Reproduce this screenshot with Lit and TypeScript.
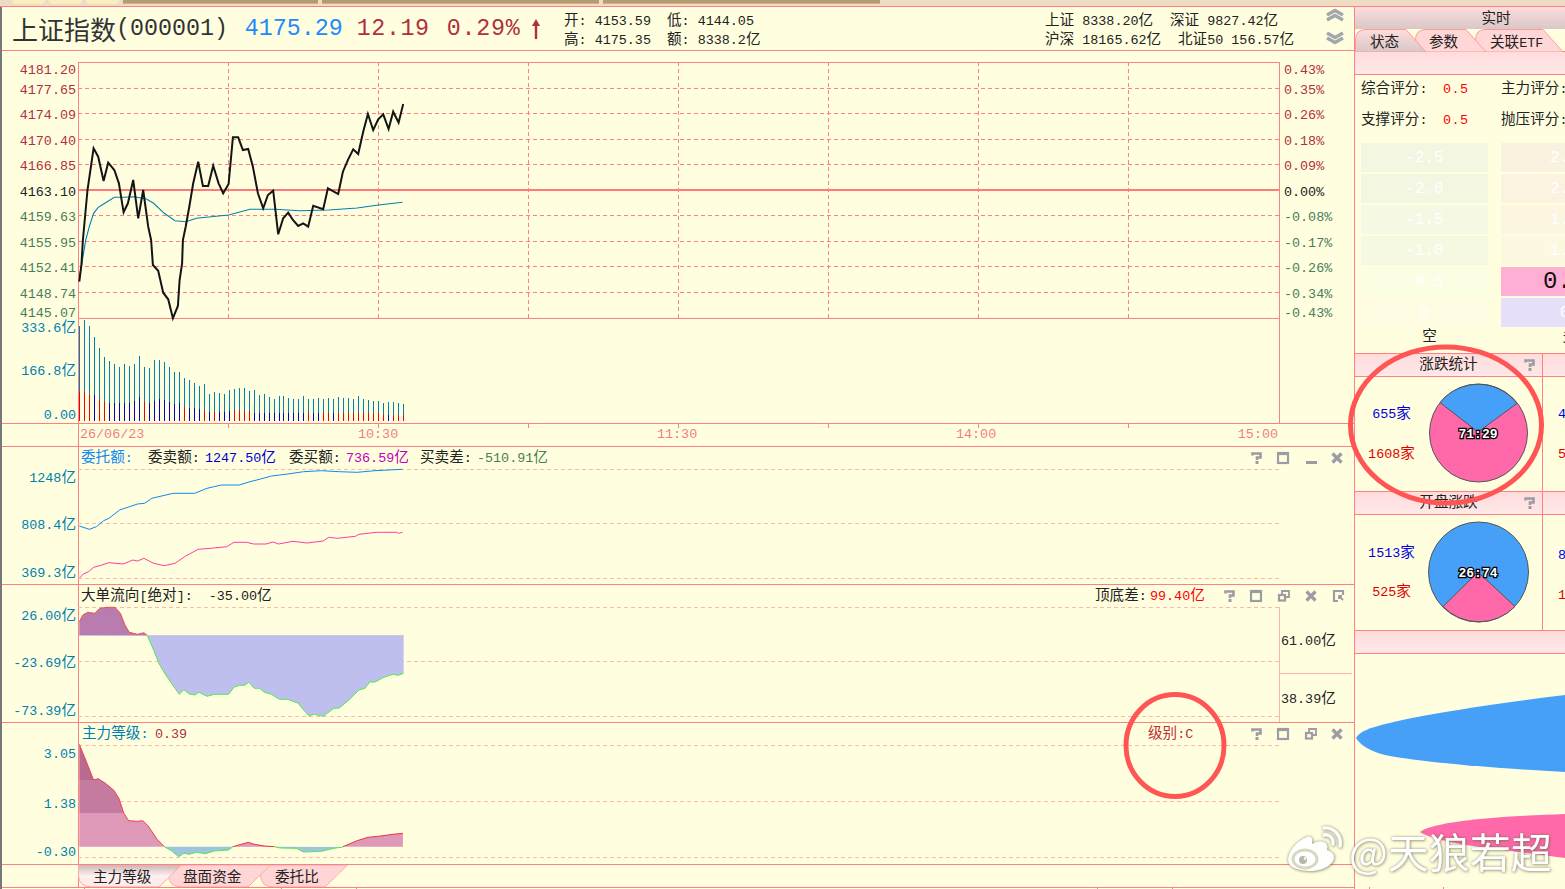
import { LitElement, html, css, svg } from "lit";
import { customElement } from "lit/decorators.js";

const MX = (v: number) => +(v / 2.8).toFixed(1);
// series were read from 2.8x / 3x crops: convert to page coordinates
const pts = (a: number[], yo: number) => {
  const o: string[] = [];
  for (let i = 0; i < a.length; i += 2) o.push(`${MX(a[i])},${+(yo + a[i + 1] / 3).toFixed(1)}`);
  return o.join(" ");
};

const PRICE = [222,845,228,795,232,720,245,570,262,445,275,470,290,543,303,488,320,510,333,550,346,637,358,610,373,540,387,655,401,570,415,680,423,720,428,795,443,812,457,878,471,898,484,955,498,918,503,840,510,790,512,720,520,680,530,620,541,550,555,485,568,558,583,558,597,497,612,550,625,580,640,552,652,412,667,412,680,450,695,447,708,500,722,580,737,625,750,585,765,572,779,703,793,655,807,638,820,660,835,678,849,670,863,680,877,617,905,628,918,565,947,582,960,515,975,478,989,448,1003,462,1017,395,1030,342,1045,390,1059,358,1073,343,1088,387,1101,335,1116,368,1129,312];
const AVG = [222,830,228,800,240,720,250,680,262,640,275,622,290,612,320,592,345,592,375,590,410,597,430,610,460,640,490,662,520,665,550,655,640,645,700,628,770,628,840,632,920,630,1000,624,1060,615,1127,607];
const VOL = [258,240,258,292,325,352,363,372,381,373,378,372,348,381,385,360,360,367,381,397,396,415,420,429,437,433,461,457,458,462,449,446,444,444,452,451,464,462,471,477,468,468,473,477,477,468,478,478,475,478,473,477,471,475,475,477,468,477,480,483,484,490,487,487,489,492];
const VOLB = [455,455,465,465,478,485,490,490,490,490,490,483,470,485,490,482,478,480,485,492,490,500,503,503,507,512,517,516,516,516,513,510,510,513,514,518,520,520,520,520,520,520,520,520,520,520,520,518,520,518,518,520,518,518,518,518,518,518,520,520,520,524,524,524,526,526];
const VOLC = "rrrbrrbbbbbbbrbbbbbbbrbbbrbrbbbrrrrbbbbbbbbbbbrbbrrbrrrrrrrrrrbr".padEnd(66, "r");
const BLUE = [222,138,250,148,270,140,290,122,305,115,335,90,385,72,405,70,425,55,485,40,545,40,580,25,620,15,670,15,700,5,730,-3,760,-12,800,-17,850,-25,900,-28,950,-25,1000,-23,1050,-28,1127,-32];
const PINK = [222,295,232,283,248,275,262,262,285,255,305,248,345,252,372,240,385,243,403,235,430,250,460,257,490,250,520,228,555,208,590,205,635,200,655,187,690,187,710,192,745,192,765,186,780,192,820,184,860,189,905,183,920,172,945,175,995,169,1005,163,1055,157,1110,157,1117,160,1127,157];
const FLOW_UP = [222,465,222,425,232,405,245,397,265,400,280,385,300,382,322,382,337,400,350,435,362,457,385,463,403,458,412,466];
const FLOW_DN = [412,466,430,510,445,550,460,578,480,610,502,643,515,629,530,642,545,645,557,637,580,649,600,643,640,643,655,622,670,616,685,616,697,607,712,625,727,625,740,637,760,643,782,658,805,658,835,670,850,690,865,707,880,703,905,709,935,685,950,684,975,662,1005,630,1022,625,1035,606,1050,606,1075,592,1100,583,1115,586,1130,580,1130,466];
const L_A = [222,440,222,133,240,180,262,240,275,236,295,250,318,270,333,295,347,340,360,362,385,364,400,362,415,378,440,418,460,440];
const L_B = [460,440,480,452,500,470,515,460,530,463,550,457,575,461,600,453,640,450,652,440];
const L_C = [652,440,695,427,712,433,740,438,768,440];
const L_D = [768,440,785,444,830,445,850,456,900,454,935,445,960,441];
const L_E = [960,440,1000,422,1030,412,1060,409,1100,403,1128,400,1128,440];

const CJK = /([\u3000-\u9fff\uff00-\uffef]+)/;
const mixS = (s: string) => s.split(CJK).map((p, i) => (i % 2 ? svg`<tspan class="c">${p}</tspan>` : p));
const mixH = (s: string) => s.split(CJK).map((p, i) => (i % 2 ? html`<span class="c">${p}</span>` : p));
const T = (x: number, y: number, s: string, cls = "", end = false) =>
  svg`<text x=${x} y=${y + 5} class="${cls} ${end ? "e" : ""}">${mixS(s)}</text>`;

const Hd = (y: number) => svg`<line class="dash" x1="78" x2="1279" y1=${y + 0.5} y2=${y + 0.5}></line>`;
const Qm = (x: number, y: number) => svg`<path class="ic3b" d="M${x - 4.5} ${y - 2.5}V${y - 4.5}H${x + 3.5}V${y - 0.5}H${x}V${y + 2}"></path><rect class="icf" x=${x - 1.5} y=${y + 3} width="3" height="3"></rect>`;
const Sq = (x: number, y: number) => svg`<rect class="ic" x=${x - 5} y=${y - 5} width="10" height="10"></rect><line class="ic" x1=${x - 5} x2=${x + 5} y1=${y - 4} y2=${y - 4}></line>`;
const Rs = (x: number, y: number) => svg`<path class="ic1" d="M${x - 2} ${y - 2}V${y - 5}H${x + 5}V${y + 1}H${x + 2}"></path><rect class="ic" x=${x - 5} y=${y - 1} width="6" height="5.500"></rect>`;
const Xx = (x: number, y: number) => svg`<path class="ic3" d="M${x - 4.5} ${y - 4.5}L${x + 4.5} ${y + 4.5}M${x + 4.5} ${y - 4.5}L${x - 4.5} ${y + 4.5}"></path>`;
const Mn = (x: number, y: number) => svg`<rect class="icf" x=${x - 5} y=${y + 3} width="11" height="3"></rect>`;
const Rb = (x: number, y: number) => svg`<path class="ic" d="M${x + 4} ${y - 1}V${y - 5}H${x - 5}V${y + 5}H${x - 1}"></path><path class="ic1" d="M${x} ${y}L${x + 4} ${y + 4}M${x} ${y + 3}V${y}H${x + 3}"></path>`;

const TICKS = [228, 378, 528, 678, 828, 978, 1128];
const LY = [69, 89, 114, 140, 165, 191, 216, 242, 267, 293, 312];
const LV = ["4181.20","4177.65","4174.09","4170.40","4166.85","4163.10","4159.63","4155.95","4152.41","4148.74","4145.07"];
const RV = ["0.43%","0.35%","0.26%","0.18%","0.09%","0.00%","-0.08%","-0.17%","-0.26%","-0.34%","-0.43%"];
const GY = [88, 113, 139, 164, 215, 241, 266, 292];

const tabPathL = (w: number) => `M.5 0H${w - 0.5}L${w - 23} 22H14Q.5 22 .5 10Z`;
const tabPathR = (w: number) => `M.5 23V11Q.5 .5 11 .5H${w - 21}L${w - 1} 23Z`;

@customElement("app-root")
export class AppRoot extends LitElement {
  static styles = css`
    :host { display:block; width:1565px; height:889px; overflow:hidden; position:relative; background:#ffffe0;
      font:13.4px "Liberation Mono","Noto Sans CJK SC",monospace; color:#222; }
    .c { font-family:"Noto Sans CJK SC",sans-serif; font-size:14.6px; }
    svg { display:block; }
    .strip { height:6px; background:#eedcc4; border-bottom:1px solid #ff8080; display:flex; gap:4px; padding-left:12px; }
    .st { width:33px; height:4px; background:#fbefc0; border-radius:0 0 4px 4px; }
    .sb { background:linear-gradient(#b89a70 70%,#d8c4a0); width:195px; height:4px; }
    .sb.w { width:277px; }
    .body { display:flex; height:882px; }
    .left { flex:none; border-left:2px solid #777; border-right:1px solid #ff8080; box-sizing:border-box; width:1355px; }
    .hdr { height:44px; box-sizing:border-box; border-bottom:1px solid #ff8080; display:grid; grid-template-columns:562px 481px 271px 1fr; align-items:start; }
    .title { display:flex; align-items:center; height:43px; padding-left:10px; font-size:23.3px; color:#333; white-space:nowrap; }
    .title .big { font-family:"Noto Sans CJK SC",sans-serif; font-size:26px; }
    .v1 { color:#2288ff; margin-left:17px; }
    .v2 { color:#b03040; margin-left:14px; letter-spacing:.6px; }
    .v3 { color:#b03040; margin-left:17px; letter-spacing:.8px; }
    .arrow { margin-left:9px; }
    .info { padding-top:2px; white-space:nowrap; }
    .row { display:flex; height:19px; line-height:19px; }
    .w103 { width:103px; } .w125 { width:125px; } .w133 { width:133px; }
    .chev { padding:1px 0 0 1px; }
    .pane { border-bottom:1px solid #ff8080; }
    text { font-size:13.4px; fill:#222; white-space:pre; }
    text.e { text-anchor:end; }
    .red { fill:#b03040; } .grn { fill:#4a7c59; } .teal { fill:#0080b0; } .sal { fill:#f08080; }
    .blue { fill:#0000d0; } .pur { fill:#c000c0; } .sky { fill:#1088f0; } .rr { fill:#ff0000; } .dr { fill:#c03030; }
    .g { stroke:#ff8080; stroke-width:1; fill:none; shape-rendering:crispEdges; }
    .gd { stroke:#ff8080; stroke-width:1; stroke-dasharray:4 3; fill:none; shape-rendering:crispEdges; }
    .dash { stroke:#ffb8a8; stroke-width:1; stroke-dasharray:4 3; shape-rendering:crispEdges; }
    .lp { stroke:#ffb0b0; stroke-width:1; shape-rendering:crispEdges; }
    .ic { fill:none; stroke:#9c9ca4; stroke-width:2.2; }
    .ic1 { fill:none; stroke:#9c9ca4; stroke-width:1.8; }
    .ic3 { fill:none; stroke:#9c9ca4; stroke-width:3.2; }
    .ic3b { fill:none; stroke:#9c9ca4; stroke-width:2.6; }
    .icf { fill:#9c9ca4; }
    .tabs { height:22px; border-bottom:1px solid #ff8080; display:flex; padding-left:76px; position:relative; }
    .tabs::before { content:""; position:absolute; left:76px; top:0; bottom:0; width:1px; background:#ff8080; }
    .tab { position:relative; height:22px; line-height:22px; padding-left:15px; box-sizing:border-box; font-family:"Noto Sans CJK SC",sans-serif; font-size:14.6px; }
    .tab svg { position:absolute; left:0; top:0; }
    .tab span { position:relative; }
    .t1 { width:104px; z-index:3; } .t2 { width:103px; margin-left:-14px; z-index:2; } .t3 { width:88px; margin-left:-11px; z-index:1; }
    .right { flex:1; overflow:hidden; min-width:0; }
    .rt { height:22px; line-height:20px; text-align:center; width:282px; background:linear-gradient(#ffdcdc,#d8c8c8); }
    .rtabs { height:22px; border-bottom:1px solid #ff8080; display:flex; }
    .rtab { position:relative; height:23px; line-height:23px; box-sizing:border-box; padding-left:15px; flex:none; }
    .rtab svg { position:absolute; left:0; top:0; }
    .rtab span { position:relative; }
    .r1 { width:72px; z-index:3; } .r2 { width:72px; margin-left:-12px; z-index:2; padding-left:14px; } .r3 { width:89px; margin-left:-12px; z-index:1; }
    .bar { height:22px; border-bottom:1px solid #ff8080; background:linear-gradient(#ffdcdc,#ffe8e8); }
    .scores { padding:1px 0 16px 6px; display:grid; grid-template-columns:82px 58px 100px; grid-auto-rows:20px; row-gap:11px; align-items:baseline; white-space:nowrap; }
    .val { color:#ff0000; letter-spacing:.5px; }
    .lv { padding-left:6px; display:grid; grid-template-columns:127px 127px; column-gap:13px; grid-auto-rows:29px; row-gap:2px; }
    .cell { display:flex; align-items:center; justify-content:center; color:#fff; font-size:16px; }
    .cell.big { color:#111; font-size:24px; }
    .kz { padding-left:6px; display:grid; grid-template-columns:127px 127px; column-gap:13px; height:27px; box-sizing:border-box; line-height:15px; border-bottom:1px solid #ff8080; text-align:center; }
    .kz span { padding-left:10px; }
    .sec { display:grid; grid-template-columns:188px 1fr; width:260px; }
    .sh { height:22px; line-height:18px; text-align:center; border-bottom:1px solid #ff8080; border-right:1px solid #ff8080; background:linear-gradient(#ffdcdc,#ffe8e8); position:relative; }
    .sh svg { position:absolute; right:5px; top:4px; }
    .sh2 { height:22px; border-bottom:1px solid #ff8080; background:linear-gradient(#ffdcdc,#ffe8e8); }
    .sb2 { display:flex; border-right:1px solid #ff8080; border-bottom:1px solid #ff8080; align-items:center; }
    .sb2.a { height:114px; } .sb2.b { height:115px; }
    .cnt { width:73px; flex:none; display:flex; flex-direction:column; align-items:center; gap:21px; }
    .sb2.a .cnt { margin-top:-6px; }
    .sb2.b .cnt { margin-top:-5px; gap:20px; }
    .sb2.b .pie { margin-top:-2px; }
    .cnt2 { padding-left:15px; display:flex; flex-direction:column; justify-content:center; gap:21px; border-bottom:1px solid #ff8080; }
    .u { color:#0000e0; height:19px; line-height:19px; } .d { color:#e00000; height:19px; line-height:19px; }
    .cnt2.ca { padding-bottom:6px; }
    .pt { font-size:13px; font-weight:bold; fill:#fff; stroke:#000; stroke-width:2.6px; paint-order:stroke; text-anchor:middle; }
    .band { height:22px; border-bottom:1px solid #ff8080; background:linear-gradient(#ffdcdc,#ffe8e8); }
    .foot { position:absolute; left:0; top:0; pointer-events:none; }
    .wm { position:absolute; left:1286px; top:822px; display:flex; align-items:center; gap:7px; filter:drop-shadow(0 0 1.5px rgba(100,100,70,.6)) drop-shadow(1px 1px 1px rgba(100,100,70,.35)); }
    .wm b { font:400 41px "Noto Sans CJK SC",sans-serif; color:#fff; white-space:nowrap; line-height:56px; }
  `;

  main() {
    const vols = VOL.map((v, i) => {
      const x = Math.round(79.3 + i * 4.98) + 0.5;
      const b = 240 + VOLB[i] / 3, t = 240 + v / 3, e = 421;
      return svg`<line x1=${x} x2=${x} y1=${t} y2=${b} stroke="#0080b0" shape-rendering="crispEdges"></line><line x1=${x} x2=${x} y1=${b} y2=${e} stroke=${VOLC[i] === "r" ? "#f00000" : "#0000d0"} shape-rendering="crispEdges"></line>`;
    });
    return html`<svg width="1353" height="372" viewBox="2 51 1353 372">
      ${GY.map((y) => svg`<line class="gd" x1="78" x2="1279" y1=${y + 0.5} y2=${y + 0.5}></line>`)}
      ${TICKS.map((x) => svg`<line class="gd" x1=${x + 0.5} x2=${x + 0.5} y1="62" y2="318"></line>`)}
      <rect class="g" x="78.5" y="62.5" width="1201" height="256"></rect>
      <line class="g" x1="78.5" x2="78.5" y1="318" y2="423"></line>
      <line class="g" x1="1279.5" x2="1279.5" y1="318" y2="423"></line>
      <line x1="78" x2="1279" y1="190" y2="190" stroke="#ff7a7a" stroke-width="2"></line>
      <polyline fill="none" stroke="#0080b0" stroke-width="1.1" points=${pts(AVG, 0)}></polyline>
      <polyline fill="none" stroke="#141414" stroke-width="2" points=${pts(PRICE, 0)}></polyline>
      ${vols}
      ${LV.map((s, i) => T(76, LY[i], s, i < 5 ? "red" : i === 5 ? "" : "grn", true))}
      ${RV.map((s, i) => T(1284, LY[i], s, i < 5 ? "red" : i === 5 ? "" : "grn"))}
      ${T(76, 327, "333.6亿", "teal", true)}${T(76, 370, "166.8亿", "teal", true)}${T(76, 414, "0.00", "teal", true)}
    </svg>`;
  }

  timeAxis() {
    return html`<svg width="1353" height="22" viewBox="2 424 1353 22">
      <line class="g" x1="78.5" x2="78.5" y1="424" y2="446"></line>
      ${TICKS.map((x) => svg`<line class="g" x1=${x + 0.5} x2=${x + 0.5} y1="424" y2="428"></line>`)}
      ${T(80, 433, "26/06/23", "sal")}${T(358, 433, "10:30", "sal")}${T(657, 433, "11:30", "sal")}${T(956, 433, "14:00", "sal")}${T(1278, 433, "15:00", "sal", true)}
    </svg>`;
  }

  pane1() {
    return html`<svg width="1353" height="137" viewBox="2 447 1353 137">
      <line class="g" x1="78.5" x2="78.5" y1="447" y2="584"></line>
      ${Hd(469)}${Hd(523)}${Hd(578)}
      <polyline fill="none" stroke="#1088f0" points=${pts(BLUE, 480)}></polyline>
      <polyline fill="none" stroke="#ff3ca0" points=${pts(PINK, 480)}></polyline>
      ${T(81, 457, "委托额:", "sky")}${T(148, 457, "委卖额:")}${T(205, 457, "1247.50亿", "blue")}
      ${T(289, 457, "委买额:")}${T(346, 457, "736.59亿", "pur")}${T(420, 457, "买卖差:")}${T(477, 457, "-510.91亿", "grn")}
      ${T(76, 477, "1248亿", "teal", true)}${T(76, 524, "808.4亿", "teal", true)}${T(76, 572, "369.3亿", "teal", true)}
      ${Qm(1257, 458)}${Sq(1283, 458)}${Mn(1311, 458)}${Xx(1337, 458)}
    </svg>`;
  }

  pane2() {
    return html`<svg width="1353" height="137" viewBox="2 585 1353 137">
      <line class="g" x1="78.5" x2="78.5" y1="585" y2="722"></line>
      ${Hd(607)}${Hd(661)}${Hd(716)}
      <line class="lp" x1="1279.5" x2="1279.5" y1="607" y2="722"></line>
      <line class="lp" x1="1280" x2="1352" y1="673.5" y2="673.5"></line>
      <polygon fill="#bfbfef" points=${pts(FLOW_DN, 480)}></polygon>
      <polyline fill="none" stroke="#50e850" points=${pts(FLOW_DN.slice(0, -2), 480)}></polyline>
      <line x1="79" x2="404" y1="635.5" y2="635.5" stroke="#d0c8e0"></line>
      <polygon fill="#b97cae" points=${pts(FLOW_UP, 480)}></polygon>
      <polyline fill="none" stroke="#f05050" points=${pts(FLOW_UP.slice(2), 480)}></polyline>
      ${T(81, 595, "大单流向[绝对]:  -35.00亿")}
      ${T(1095, 595, "顶底差:")}${T(1150, 595, "99.40亿", "rr")}
      ${T(76, 615, "26.00亿", "teal", true)}${T(76, 662, "-23.69亿", "teal", true)}${T(76, 710, "-73.39亿", "teal", true)}
      ${T(1281, 640, "61.00亿")}${T(1281, 698, "38.39亿")}
      ${Qm(1230, 596)}${Sq(1256, 596)}${Rs(1284, 596)}${Xx(1311, 596)}${Rb(1339, 596)}
    </svg>`;
  }

  pane3() {
    const poly = (a: number[], fill: string, stroke: string) => svg`<polygon fill=${fill} points=${pts(a, 700)}></polygon><polyline fill="none" stroke=${stroke} points=${pts(a, 700)}></polyline>`;
    return html`<svg width="1353" height="141" viewBox="2 723 1353 141">
      <defs><clipPath id="la"><polygon points=${pts(L_A, 700)}></polygon></clipPath></defs>
      <line class="g" x1="78.5" x2="78.5" y1="723" y2="864"></line>
      ${Hd(745)}${Hd(801)}${Hd(857)}
      <g clip-path="url(#la)">
        <rect x="78" y="740" width="100" height="40" fill="#b86a90"></rect>
        <rect x="78" y="780" width="100" height="33" fill="#c57aa0"></rect>
        <rect x="78" y="813" width="100" height="34" fill="#de98b8"></rect>
      </g>
      <polyline fill="none" stroke="#f04050" points=${pts(L_A.slice(2), 700)}></polyline>
      ${poly(L_B, "#a0c4e0", "#50e850")}${poly(L_C, "#de98b8", "#f03040")}${poly(L_D, "#a0c4e0", "#50e850")}
      <polygon fill="#de98b8" points=${pts(L_E, 700)}></polygon>
      <polyline fill="none" stroke="#f03040" points=${pts(L_E.slice(0, -2), 700)}></polyline>
      ${T(82, 733, "主力等级:", "teal")}${T(155, 733, "0.39", "red")}
      ${T(1148, 733, "级别:C", "dr")}
      ${T(76, 753, "3.05", "teal", true)}${T(76, 803, "1.38", "teal", true)}${T(76, 851, "-0.30", "teal", true)}
      ${Qm(1257, 734)}${Sq(1283, 734)}${Rs(1311, 734)}${Xx(1337, 734)}
    </svg>`;
  }

  tabs() {
    const tab = (cls: string, w: number, label: string, id: string, active: boolean) => html`<div class="tab ${cls}">
      <svg width=${w} height="22" viewBox="0 0 ${w} 22">
        <defs><linearGradient id=${id} x1="0" x2="0" y1="0" y2="1"><stop offset="0" stop-color=${active ? "#c8b8b8" : "#ffd5d5"}></stop><stop offset=".5" stop-color=${active ? "#fff0f0" : "#ffd5d5"}></stop><stop offset="1" stop-color=${active ? "#ffe8e8" : "#ffd5d5"}></stop></linearGradient></defs>
        <path d=${tabPathL(w)} fill="url(#${id})" stroke="#ffa8a8"></path>
      </svg><span>${label}</span></div>`;
    return html`<div class="tabs">${tab("t1", 104, "主力等级", "tg1", true)}${tab("t2", 103, "盘面资金", "tg2", false)}${tab("t3", 88, "委托比", "tg3", false)}</div>`;
  }

  rtabs() {
    const tab = (cls: string, w: number, label: string, id: string, active: boolean) => html`<div class="rtab ${cls}">
      <svg width=${w} height="23" viewBox="0 0 ${w} 23">
        <defs><linearGradient id=${id} x1="0" x2="0" y1="0" y2="1"><stop offset="0" stop-color=${active ? "#ffdcdc" : "#ffd5d5"}></stop><stop offset="1" stop-color=${active ? "#d8c8c8" : "#ffd8d8"}></stop></linearGradient></defs>
        <path d=${tabPathR(w)} fill="url(#${id})" stroke="#ff9a9a"></path>
      </svg><span>${mixH(label)}</span></div>`;
    return html`<div class="rtabs">${tab("r1", 72, "状态", "rg1", true)}${tab("r2", 72, "参数", "rg2", false)}${tab("r3", 89, "关联ETF", "rg3", false)}</div>`;
  }

  pie(kind: "a" | "b") {
    const a = kind === "a";
    return html`<svg class="pie" width="102" height="102" viewBox="0 0 102 102">
      <circle cx="50.500" cy=${a ? 50 : 51} r=${a ? 49 : 50} fill=${a ? "#ff69aa" : "#46a0f8"} stroke="#555"></circle>
      ${a
        ? svg`<path d="M50 49L12 19.500A49 49 0 0 1 89 20.500Z" fill="#46a0f8" stroke="#555"></path>`
        : svg`<path d="M50 51L15 85.500A50 50 0 0 0 87 85.500Z" fill="#ff69aa" stroke="#555"></path>`}
      <text x="50" y=${a ? 55 : 56} class="pt">${a ? "71:29" : "26:74"}</text>
    </svg>`;
  }

  right() {
    const l = [["-2.5","#f3f6e0"],["-2.0","#f3f6e0"],["-1.5","#f5f8e2"],["-1.0","#f6f9e2"],["-0.5","#fbfee2"],["0","#fefde3"]];
    const r = [["2.5","#f9f2df"],["2.0","#fbf3e0"],["1.5","#fcf5e0"],["1.0","#fdf8e0"],["0.5","#ffaed4"],["0","#e6e0fa"]];
    return html`<div class="right">
      <div class="rt"><span class="c">实时</span></div>
      ${this.rtabs()}
      <div class="bar"></div>
      <div class="scores">
        <span>${mixH("综合评分:")}</span><span class="val">0.5</span><span>${mixH("主力评分:")}</span>
        <span>${mixH("支撑评分:")}</span><span class="val">0.5</span><span>${mixH("抛压评分:")}</span>
      </div>
      <div class="lv">
        ${l.map((c, i) => html`<div class="cell" style="background:${c[1]}">${c[0]}</div><div class="cell ${i === 4 ? "big" : ""}" style="background:${r[i][1]}">${r[i][0]}</div>`)}
      </div>
      <div class="kz"><span class="c">空</span><span class="c">多</span></div>
      <div class="sec">
        <div class="sh"><span class="c">涨跌统计</span><svg width="14" height="14" viewBox="-7 -7 14 14">${Qm(0, 0)}</svg></div><div class="sh2"></div>
        <div class="sb2 a"><div class="cnt"><span class="u">${mixH("655家")}</span><span class="d">${mixH("1608家")}</span></div>${this.pie("a")}</div>
        <div class="cnt2 ca"><span class="u">${mixH("455家")}</span><span class="d">${mixH("586家")}</span></div>
        <div class="sh"><span class="c">开盘涨跌</span><svg width="14" height="14" viewBox="-7 -7 14 14">${Qm(0, 0)}</svg></div><div class="sh2"></div>
        <div class="sb2 b"><div class="cnt"><span class="u">${mixH("1513家")}</span><span class="d">${mixH("525家")}</span></div>${this.pie("b")}</div>
        <div class="cnt2"><span class="u">${mixH("822家")}</span><span class="d">${mixH("160家")}</span></div>
      </div>
      <div class="band"></div>
    </div>`;
  }

  render() {
    return html`
      <div class="strip">
        <div class="st"></div><div class="st"></div><div class="st"></div>
        <div class="sb"></div><div class="sb w"></div><div class="sb w"></div>
      </div>
      <div class="body">
        <div class="left">
          <div class="hdr">
            <div class="title"><span class="big">上证指数</span><span>(000001)</span><span class="v1">4175.29</span><span class="v2">12.19</span><span class="v3">0.29%</span>
              <svg class="arrow" width="12" height="22" viewBox="0 0 12 22"><path d="M6 1L10 8H7.200V21H4.800V8H2Z" fill="#b03040"></path></svg>
            </div>
            <div class="info">
              <div class="row"><span class="w103">${mixH("开: 4153.59")}</span><span>${mixH("低: 4144.05")}</span></div>
              <div class="row"><span class="w103">${mixH("高: 4175.35")}</span><span>${mixH("额: 8338.2亿")}</span></div>
            </div>
            <div class="info">
              <div class="row"><span class="w125">${mixH("上证 8338.20亿")}</span><span>${mixH("深证 9827.42亿")}</span></div>
              <div class="row"><span class="w133">${mixH("沪深 18165.62亿")}</span><span>${mixH("北证50 156.57亿")}</span></div>
            </div>
            <svg class="chev" width="36" height="42" viewBox="0 0 36 42">
              <path d="M10 7L18 2.500L26 7M10 12L18 7.500L26 12" fill="none" stroke="#a0a8ac" stroke-width="3.400"></path>
              <path d="M10 25L18 29.500L26 25M10 30L18 34.500L26 30" fill="none" stroke="#a0a8ac" stroke-width="3.400"></path>
            </svg>
          </div>
          <div class="pane">${this.main()}</div>
          <div class="pane">${this.timeAxis()}</div>
          <div class="pane">${this.pane1()}</div>
          <div class="pane">${this.pane2()}</div>
          <div class="pane">${this.pane3()}</div>
          ${this.tabs()}
        </div>
        ${this.right()}
      </div>
      <svg class="foot" width="1565" height="889" viewBox="0 0 1565 889">
        <path d="M1356 738C1360 731 1370 728 1385 724C1420 715 1490 704 1565 695V772C1490 768 1420 762 1385 755C1370 751 1360 745 1356 738Z" fill="#46a0f8"></path>
        <path d="M1420 832C1428 826 1450 822 1480 819C1510 816 1540 815 1565 814V858C1530 853 1490 849 1460 844C1440 840 1425 836 1420 832Z" fill="#ff69aa"></path>
        <ellipse cx="1446" cy="425" rx="95.500" ry="78" fill="none" stroke="#ff5555" stroke-width="5"></ellipse>
        <ellipse cx="1175" cy="745.500" rx="49" ry="51" fill="none" stroke="#ff5555" stroke-width="5"></ellipse>
        <path d="M84.500 887V889M281.500 887V889M356.500 887V889M1097.500 887V889M1172.500 887V889M1369.500 887V889M1443.500 887V889" stroke="#ff8080"></path>
      </svg>
      <div class="wm">
        <svg width="56" height="50" viewBox="0 0 56 50">
          <path d="M21 12C10 16 2 27 2 35C2 42 12 46 24 46C38 46 48 39 48 32C48 28 44 26 41 25C42 21 41 18 38 17C34 15 29 17 26 19C27 15 26 10 21 12Z" fill="#fff"></path>
          <ellipse cx="19" cy="34" rx="12" ry="9" fill="#fff" stroke="#d8d8c0" stroke-width="3"></ellipse>
          <circle cx="17" cy="35" r="4" fill="#b8b8a8"></circle><circle cx="19" cy="33.500" r="1.200" fill="#fff"></circle>
          <path d="M38 10C43 9 48 13 47 19M38 3C47 2 56 10 54 21" fill="none" stroke="#fff" stroke-width="3.400" stroke-linecap="round"></path>
        </svg>
        <b>@天狼若超</b>
      </div>
    `;
  }
}
